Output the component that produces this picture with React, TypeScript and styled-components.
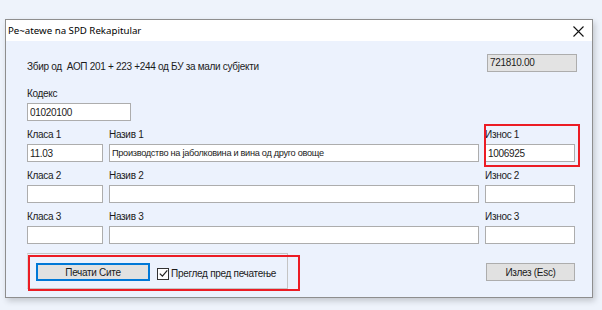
import styled, { createGlobalStyle } from 'styled-components'

const GlobalStyle = createGlobalStyle`
  html, body {
    margin: 0;
    padding: 0;
    background: #eef3fb;
  }
  body {
    font-family: "Liberation Sans", Arial, sans-serif;
    font-size: 10px;
    letter-spacing: -0.3px;
    color: #1b1b1b;
  }
`

const rows = [
  { n: 1, klasa: '11.03', naziv: 'Производство на јаболковина и вина од друго овоще', iznos: '1006925' },
  { n: 2, klasa: '', naziv: '', iznos: '' },
  { n: 3, klasa: '', naziv: '', iznos: '' },
]

function App() {
  return (
    <Page>
      <GlobalStyle />
      <Dialog>
        <TitleBar>
          <Title>Pe~atewe na SPD Rekapitular</Title>
          <CloseBtn>
            <svg width="11" height="11" viewBox="0 0 11 11">
              <path d="M0.5 0.5 L10.5 10.5 M10.5 0.5 L0.5 10.5" stroke="#111" strokeWidth="1.1" />
            </svg>
          </CloseBtn>
        </TitleBar>
        <Body>
          <SumRow>
            <SumText>Збир од&nbsp; АОП 201 + 223 +244 од БУ за мали субјекти</SumText>
            <ReadOnlyBox>721810.00</ReadOnlyBox>
          </SumRow>
          <Field>
            <Label>Кодекс</Label>
            <Input $w={104} defaultValue="01020100" />
          </Field>
          {rows.map(r => (
            <Grid key={r.n}>
              <Field>
                <Label>Класа {r.n}</Label>
                <Input defaultValue={r.klasa} />
              </Field>
              <Field>
                <Label>Назив {r.n}</Label>
                <Input $small defaultValue={r.naziv} />
              </Field>
              <Field $marked={r.n === 1}>
                <Label>Износ {r.n}</Label>
                <Input defaultValue={r.iznos} />
              </Field>
            </Grid>
          ))}
          <BottomRow>
            <GroupBox>
              <PrintBtn>Печати Сите</PrintBtn>
              <CheckLabel>
                <CheckBox>
                  <svg width="9" height="9" viewBox="0 0 9 9">
                    <path d="M0.8 4.6 L3.4 7.2 L8.3 1.3" fill="none" stroke="#222" strokeWidth="1.2" />
                  </svg>
                </CheckBox>
                Преглед пред печатење
              </CheckLabel>
            </GroupBox>
            <ExitBtn>Излез (Esc)</ExitBtn>
          </BottomRow>
        </Body>
      </Dialog>
    </Page>
  )
}

const Page = styled.div`
  padding: 19px 0 0 5px;
  height: 310px;
  box-sizing: border-box;
`
const Dialog = styled.div`
  width: 588px;
  height: 279px;
  box-sizing: border-box;
  border: 1px solid #8e8e8e;
  background: #ecf2fd;
  box-shadow: 2px 3px 6px rgba(0, 0, 0, 0.18);
  display: flex;
  flex-direction: column;
`
const TitleBar = styled.div`
  height: 21px;
  background: #ffffff;
  display: flex;
  align-items: center;
  justify-content: space-between;
  padding: 0 8px 0 2px;
`
const Title = styled.span`
  font-family: "Noto Sans", "Open Sans", sans-serif;
  font-size: 9.7px;
  letter-spacing: 0;
  color: #000;
`
const CloseBtn = styled.span`
  display: flex;
  align-items: center;
  padding-top: 1px;
`
const Body = styled.div`
  flex: 1;
  padding: 13px 16px 0 21px;
  display: flex;
  flex-direction: column;
`
const SumRow = styled.div`
  display: flex;
  justify-content: space-between;
  align-items: flex-start;
  margin-bottom: 15px;
`
const SumText = styled.span`
  padding-top: 7px;
`
const ReadOnlyBox = styled.div`
  width: 90px;
  height: 18px;
  box-sizing: border-box;
  background: #e3e3e3;
  border: 1px solid #adadad;
  padding: 1px 2px;
  line-height: 14px;
  margin-right: -1px;
`
const Grid = styled.div`
  display: grid;
  grid-template-columns: 76px 370px 90px;
  column-gap: 6px;
  margin-top: 7px;
`
const Field = styled.div<{ $marked?: boolean }>`
  position: relative;
  display: flex;
  flex-direction: column;
  &::after {
    content: '';
    display: ${p => (p.$marked ? 'block' : 'none')};
    position: absolute;
    top: -4px;
    left: -1px;
    right: -5px;
    bottom: -5px;
    border: 2px solid #ec1c24;
    pointer-events: none;
  }
`
const Label = styled.span`
  line-height: 14px;
  height: 14px;
  margin-bottom: 2px;
`
const Input = styled.input<{ $w?: number; $small?: boolean }>`
  width: ${p => (p.$w ? `${p.$w}px` : '100%')};
  height: 18px;
  box-sizing: border-box;
  border: 1px solid #adadad;
  background: #fff;
  padding: 0 2px;
  margin: 0;
  font-family: "Liberation Sans", Arial, sans-serif;
  font-size: ${p => (p.$small ? '9.2px' : '10px')};
  letter-spacing: -0.3px;
  color: #1b1b1b;
  outline: none;
`
const BottomRow = styled.div`
  display: flex;
  justify-content: space-between;
  align-items: center;
  margin-top: 9px;
`
const GroupBox = styled.div`
  position: relative;
  width: 261px;
  height: 36px;
  box-sizing: border-box;
  border: 1px solid #c4c4c4;
  border-left-color: #dadada;
  padding: 0 0 0 8px;
  display: flex;
  align-items: center;
  gap: 7px;
  &::after {
    content: '';
    position: absolute;
    top: 1px;
    left: 0;
    right: -13px;
    bottom: -3px;
    border: 2px solid #ec1c24;
    pointer-events: none;
  }
`
const Button = styled.button`
  height: 18px;
  box-sizing: border-box;
  background: #e1e1e1;
  border: 1px solid #adadad;
  font-family: "Liberation Sans", Arial, sans-serif;
  font-size: 10px;
  letter-spacing: -0.3px;
  color: #1b1b1b;
  padding: 0;
  margin-top: 2px;
`
const PrintBtn = styled(Button)`
  width: 114px;
  border: 2px solid #0078d7;
`
const ExitBtn = styled(Button)`
  width: 89px;
  margin-right: 1px;
`
const CheckLabel = styled.label`
  display: flex;
  align-items: center;
  gap: 2px;
  margin-top: 5px;
  white-space: nowrap;
`
const CheckBox = styled.span`
  width: 12px;
  height: 12px;
  box-sizing: border-box;
  border: 1px solid #333;
  background: #fff;
  display: flex;
  align-items: center;
  justify-content: center;
`

export default App
